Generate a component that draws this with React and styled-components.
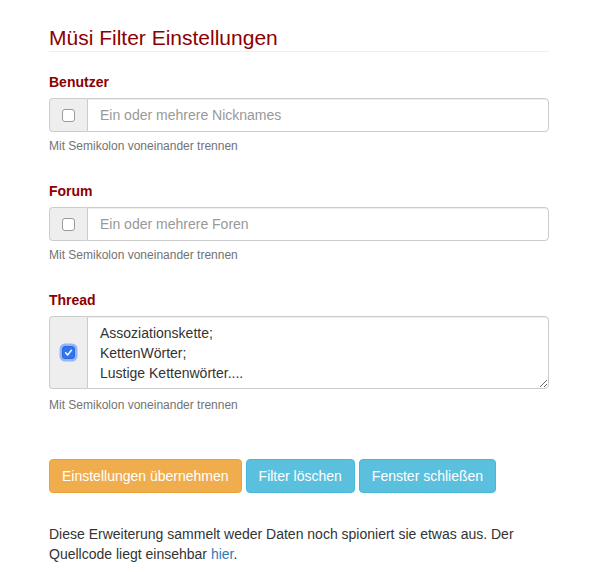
import React from 'react';
import styled, { createGlobalStyle } from 'styled-components';

const GlobalStyle = createGlobalStyle`
  body {
    margin: 0;
    background: #fff;
    font-family: "Liberation Sans", Arial, Helvetica, sans-serif;
    font-size: 14px;
    line-height: 20px;
    color: #333;
  }
`;

const groups = [
  { id: 'user', label: 'Benutzer', placeholder: 'Ein oder mehrere Nicknames' },
  { id: 'forum', label: 'Forum', placeholder: 'Ein oder mehrere Foren' },
  {
    id: 'thread',
    label: 'Thread',
    value: 'Assoziationskette;\nKettenWörter;\nLustige Kettenwörter....',
    multiline: true,
    checked: true,
  },
];

const checkMark =
  "url(\"data:image/svg+xml,%3Csvg xmlns='http://www.w3.org/2000/svg' viewBox='0 0 13 13'%3E%3Cpath d='M3.6 6.8l2 2.1 3.8-4.6' fill='none' stroke='white' stroke-width='1.5' stroke-linecap='round' stroke-linejoin='round'/%3E%3C/svg%3E\")";

const FilterSettings = () => {
  return (
    <Page>
      <GlobalStyle />
      <Title>Müsi Filter Einstellungen</Title>
      {groups.map((g) => (
        <Group key={g.id}>
          <Label htmlFor={g.id}>{g.label}</Label>
          <InputGroup>
            <Addon>
              <Check type="checkbox" defaultChecked={g.checked} />
            </Addon>
            {g.multiline ? (
              <TextArea id={g.id} defaultValue={g.value} rows={3} />
            ) : (
              <TextInput id={g.id} type="text" placeholder={g.placeholder} />
            )}
          </InputGroup>
          <Help $wide={g.multiline}>Mit Semikolon voneinander trennen</Help>
        </Group>
      ))}
      <Buttons>
        <Button $variant="warning">Einstellungen übernehmen</Button>
        <Button $variant="info">Filter löschen</Button>
        <Button $variant="info">Fenster schließen</Button>
      </Buttons>
      <Note>
        Diese Erweiterung sammelt weder Daten noch spioniert sie etwas aus. Der
        Quellcode liegt einsehbar <Link href="#">hier</Link>.
      </Note>
    </Page>
  );
};

const Page = styled.div`
  width: 500px;
  padding: 0 0 0 49px;
`;

const Title = styled.h3`
  margin: 26px 0 0;
  padding-bottom: 2px;
  font-size: 21px;
  line-height: 23px;
  font-weight: 400;
  color: #8b0000;
  border-bottom: 1px solid #eee;
`;

const Group = styled.div`
  margin-top: 20px;

  & + & {
    margin-top: 26px;
  }
`;

const Label = styled.label`
  display: block;
  margin-bottom: 6px;
  font-weight: 700;
  color: #8b0000;
`;

const InputGroup = styled.div`
  display: flex;
  align-items: stretch;
`;

const Addon = styled.span`
  display: flex;
  align-items: center;
  justify-content: center;
  width: 37px;
  flex: none;
  background: #eee;
  border: 1px solid #ccc;
  border-right: 0;
  border-radius: 4px 0 0 4px;
`;

const Check = styled.input`
  appearance: none;
  box-sizing: border-box;
  margin: 0;
  width: 13px;
  height: 13px;
  background: #fff;
  border: 1px solid #9a9a9a;
  border-radius: 3px;

  &:checked {
    background: #2f74f2 ${checkMark} center / 13px 13px no-repeat;
    border-color: #2a67d8;
    box-shadow: 0 0 0 2.5px rgba(90, 145, 250, 0.6);
  }
`;

const fieldBase = `
  flex: 1;
  box-sizing: border-box;
  margin: 0;
  padding: 6px 12px;
  font-family: "Liberation Sans", Arial, Helvetica, sans-serif;
  font-size: 14px;
  line-height: 20px;
  color: #555;
  background: #fff;
  border: 1px solid #ccc;
  border-radius: 0 4px 4px 0;
  box-shadow: inset 0 1px 1px rgba(0, 0, 0, 0.075);
  outline: none;
`;

const TextInput = styled.input`
  ${fieldBase}
  height: 34px;

  &::placeholder {
    color: #999;
  }
`;

const TextArea = styled.textarea`
  ${fieldBase}
  display: block;
  height: 73px;
  resize: vertical;
  color: #333;
`;

const Help = styled.div`
  margin-top: ${(p) => (p.$wide ? '8px' : '6px')};
  font-size: 12px;
  line-height: 17px;
  color: #737373;
`;

const Buttons = styled.div`
  display: flex;
  gap: 4px;
  margin-top: 45px;
`;

const palette = {
  warning: { bg: '#f0ad4e', border: '#eea236' },
  info: { bg: '#5bc0de', border: '#46b8da' },
};

const Button = styled.button`
  height: 34px;
  padding: 6px 12px;
  font-family: "Liberation Sans", Arial, Helvetica, sans-serif;
  font-size: 14px;
  line-height: 20px;
  color: #fff;
  background: ${(p) => palette[p.$variant].bg};
  border: 1px solid ${(p) => palette[p.$variant].border};
  border-radius: 4px;
  white-space: nowrap;
  cursor: pointer;
`;

const Note = styled.p`
  margin: 31px 0 0;
  width: 500px;
  color: #333;
`;

const Link = styled.a`
  color: #337ab7;
  text-decoration: none;
`;

export default FilterSettings;
